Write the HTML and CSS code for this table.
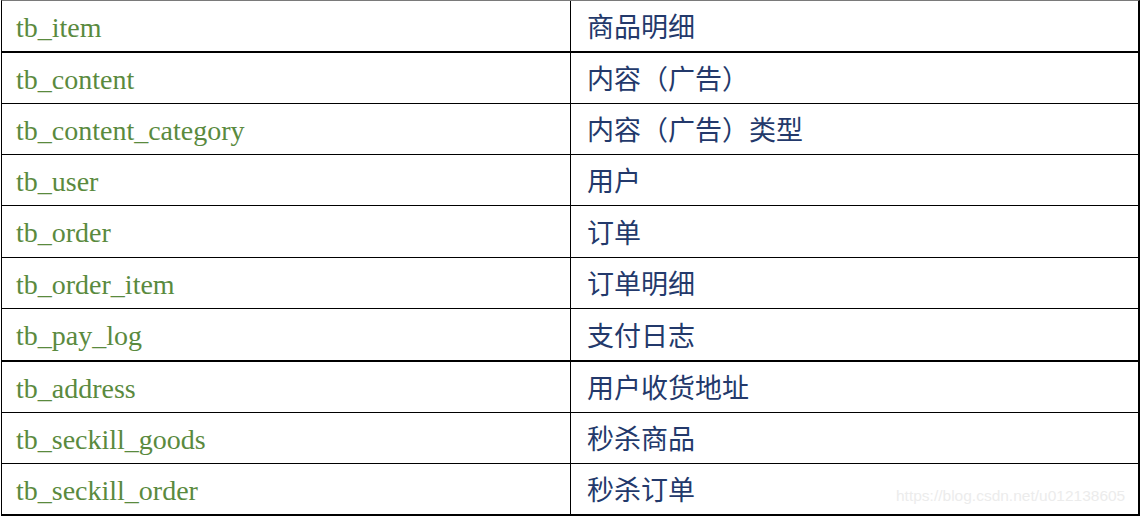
FILE: index.html
```html
<!DOCTYPE html>
<html lang="zh-CN">
<head>
<meta charset="utf-8">
<title>tables</title>
<link rel="stylesheet" href="styles.css">
</head>
<body>
<div class="sheet">
  <div class="table">
    <div class="row thick"><div class="cell name">tb_item</div><div class="cell desc">商品明细</div></div>
    <div class="row"><div class="cell name">tb_content</div><div class="cell desc">内容（广告）</div></div>
    <div class="row"><div class="cell name">tb_content_category</div><div class="cell desc">内容（广告）类型</div></div>
    <div class="row"><div class="cell name">tb_user</div><div class="cell desc">用户</div></div>
    <div class="row tall"><div class="cell name">tb_order</div><div class="cell desc">订单</div></div>
    <div class="row"><div class="cell name">tb_order_item</div><div class="cell desc">订单明细</div></div>
    <div class="row thick tall"><div class="cell name">tb_pay_log</div><div class="cell desc">支付日志</div></div>
    <div class="row"><div class="cell name">tb_address</div><div class="cell desc">用户收货地址</div></div>
    <div class="row"><div class="cell name">tb_seckill_goods</div><div class="cell desc">秒杀商品</div></div>
    <div class="row thick last"><div class="cell name">tb_seckill_order</div><div class="cell desc">秒杀订单</div></div>
  </div>
  <div class="watermark">https://blog.csdn.net/u012138605</div>
</div>
</body>
</html>
```
FILE: styles.css
```css
html, body {
  margin: 0;
  padding: 0;
  background: #ffffff;
}
.sheet {
  position: relative;
  width: 1140px;
  height: 517px;
  overflow: hidden;
}
.table {
  margin-left: 1px;
  width: 1136px;
  border-top: 1px solid #7a7a7a;
  border-left: 1px solid #000;
  border-right: 2px solid #000;
  display: flex;
  flex-direction: column;
}
.row {
  display: flex;
  height: 50px;
  border-bottom: 1px solid #000;
}
.row.tall {
  height: 51px;
}
.row.thick {
  border-bottom-width: 2px;
}
.row.last {
  height: 50px;
}
.cell {
  display: flex;
  align-items: center;
  box-sizing: border-box;
}
.name {
  width: 569px;
  border-right: 1px solid #000;
  padding-left: 14px;
  padding-top: 3px;
  font-family: "Liberation Serif", "Times New Roman", serif;
  font-size: 28px;
  color: #5a8a3e;
}
.desc {
  flex: 1;
  padding-left: 16px;
  padding-bottom: 1px;
  font-family: "Liberation Serif", "Noto Sans CJK SC", sans-serif;
  font-size: 27px;
  color: #23396b;
}
.watermark {
  position: absolute;
  left: 896px;
  top: 487px;
  font-family: "Liberation Sans", Arial, sans-serif;
  font-size: 15.5px;
  color: #ececec;
  white-space: nowrap;
}
```
